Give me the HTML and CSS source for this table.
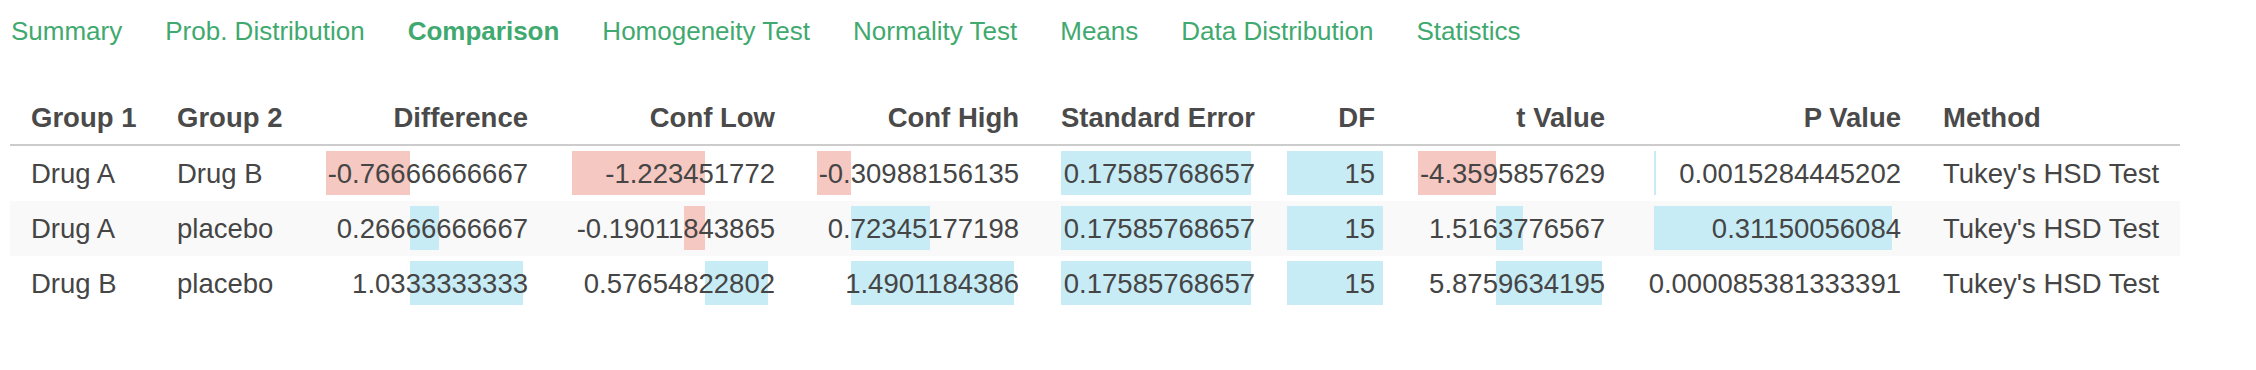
FILE: index.html
```html
<!DOCTYPE html>
<html lang="en">
<head>
<meta charset="utf-8">
<title>Comparison</title>
<link rel="stylesheet" href="styles.css">
</head>
<body>
<nav class="tabs">
  <a class="tab" href="#">Summary</a>
  <a class="tab" href="#">Prob. Distribution</a>
  <a class="tab active" href="#">Comparison</a>
  <a class="tab" href="#">Homogeneity Test</a>
  <a class="tab" href="#">Normality Test</a>
  <a class="tab" href="#">Means</a>
  <a class="tab" href="#">Data Distribution</a>
  <a class="tab" href="#">Statistics</a>
</nav>
<table class="grid">
  <colgroup>
    <col class="c-g1"><col class="c-g2"><col class="c-diff"><col class="c-low"><col class="c-high">
    <col class="c-se"><col class="c-df"><col class="c-t"><col class="c-p"><col class="c-method">
  </colgroup>
  <thead>
    <tr>
      <th class="txt">Group 1</th>
      <th class="txt">Group 2</th>
      <th class="num">Difference</th>
      <th class="num">Conf Low</th>
      <th class="num">Conf High</th>
      <th class="num">Standard Error</th>
      <th class="num">DF</th>
      <th class="num">t Value</th>
      <th class="num">P Value</th>
      <th class="txt">Method</th>
    </tr>
  </thead>
  <tbody>
    <tr>
      <td class="txt">Drug A</td>
      <td class="txt">Drug B</td>
      <td class="num bar neg" style="--l:21px;--r:105px">-0.76666666667</td>
      <td class="num bar neg" style="--l:23px;--r:156px">-1.223451772</td>
      <td class="num bar neg" style="--l:21px;--r:55px">-0.30988156135</td>
      <td class="num bar pos" style="--l:21px;--r:211px">0.17585768657</td>
      <td class="num bar pos" style="--l:11px;--r:107px">15</td>
      <td class="num bar neg" style="--l:22px;--r:100px">-4.3595857629</td>
      <td class="num bar pos" style="--l:28px;--r:30px">0.0015284445202</td>
      <td class="txt">Tukey's HSD Test</td>
    </tr>
    <tr class="alt">
      <td class="txt">Drug A</td>
      <td class="txt">placebo</td>
      <td class="num bar pos" style="--l:105px;--r:134px">0.26666666667</td>
      <td class="num bar neg" style="--l:135px;--r:156px">-0.19011843865</td>
      <td class="num bar pos" style="--l:55px;--r:134px">0.72345177198</td>
      <td class="num bar pos" style="--l:21px;--r:211px">0.17585768657</td>
      <td class="num bar pos" style="--l:11px;--r:107px">15</td>
      <td class="num bar pos" style="--l:100px;--r:127px">1.5163776567</td>
      <td class="num bar pos" style="--l:28px;--r:266px">0.31150056084</td>
      <td class="txt">Tukey's HSD Test</td>
    </tr>
    <tr>
      <td class="txt">Drug B</td>
      <td class="txt">placebo</td>
      <td class="num bar pos" style="--l:105px;--r:218px">1.0333333333</td>
      <td class="num bar pos" style="--l:156px;--r:219px">0.57654822802</td>
      <td class="num bar pos" style="--l:55px;--r:218px">1.4901184386</td>
      <td class="num bar pos" style="--l:21px;--r:211px">0.17585768657</td>
      <td class="num bar pos" style="--l:11px;--r:107px">15</td>
      <td class="num bar pos" style="--l:100px;--r:206px">5.8759634195</td>
      <td class="num">0.000085381333391</td>
      <td class="txt">Tukey's HSD Test</td>
    </tr>
  </tbody>
</table>
</body>
</html>
```
FILE: styles.css
```css
html, body {
  margin: 0;
  padding: 0;
  background: #ffffff;
}

body {
  font-family: "Liberation Sans", Arial, Helvetica, sans-serif;
  color: #454545;
}

.tabs {
  display: flex;
  gap: 43px;
  padding: 16px 0 0 11px;
  font-size: 26px;
  line-height: 30px;
}

.tab {
  color: #3fa96f;
  text-decoration: none;
  white-space: nowrap;
}

.tab.active {
  font-weight: bold;
}

.grid {
  margin: 56px 0 0 10px;
  width: 2170px;
  table-layout: fixed;
  border-collapse: separate;
  border-spacing: 0;
  font-size: 27.5px;
  line-height: 31px;
}

.c-g1 { width: 146px; }
.c-g2 { width: 149px; }
.c-diff { width: 244px; }
.c-low { width: 247px; }
.c-high { width: 244px; }
.c-se { width: 236px; }
.c-df { width: 120px; }
.c-t { width: 230px; }
.c-p { width: 296px; }
.c-method { width: 258px; }

.grid th {
  font-weight: bold;
  color: #4a4a4a;
  padding: 0 21px 11px;
  border-bottom: 2px solid #cccccc;
  white-space: nowrap;
}

.grid td {
  height: 55px;
  padding: 0 21px;
  vertical-align: middle;
  white-space: nowrap;
  box-sizing: border-box;
}

.txt { text-align: left; }
.num { text-align: right; }

.alt { background: #f9f9f9; }

.bar {
  background-image: linear-gradient(90deg,
    transparent var(--l), var(--c) var(--l),
    var(--c) var(--r), transparent var(--r));
  background-repeat: no-repeat;
  background-size: 100% 44px;
  background-position: 0 5px;
}

.neg { --c: #f5c8c2; }
.pos { --c: #c7ecf5; }
```
